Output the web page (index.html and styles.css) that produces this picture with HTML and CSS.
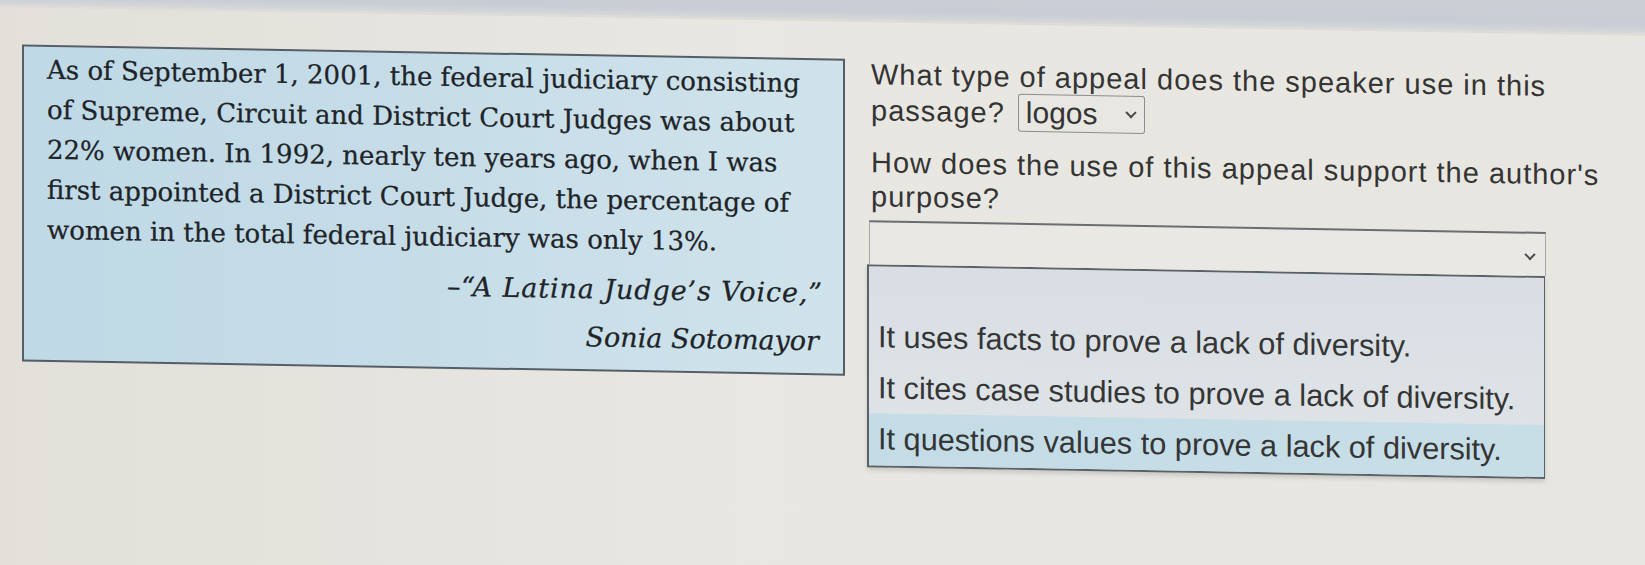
FILE: index.html
```html
<!DOCTYPE html>
<html>
<head>
<meta charset="utf-8">
<link rel="stylesheet" href="styles.css">
</head>
<body>
<div class="wrap">
  <div class="topbar"></div>
  <div class="page">
    <div class="passage">
      <p class="quote">As of September 1, 2001, the federal judiciary consisting<br>of Supreme, Circuit and District Court Judges was about<br>22% women. In 1992, nearly ten years ago, when I was<br>first appointed a District Court Judge, the percentage of<br>women in the total federal judiciary was only 13%.</p>
      <p class="cite title">–“A Latina Judge’s Voice,”</p>
      <p class="cite author">Sonia Sotomayor</p>
    </div>
    <div class="questions">
      <p class="q q1">What type of appeal does the speaker use in this<br>passage? <span class="sel small">logos<span class="chev"></span></span></p>
      <p class="q q2">How does the use of this appeal support the author's<br>purpose?</p>
      <div class="sel wide"><span class="chev"></span></div>
      <ul class="list">
        <li class="opt empty"></li>
        <li class="opt">It uses facts to prove a lack of diversity.</li>
        <li class="opt">It cites case studies to prove a lack of diversity.</li>
        <li class="opt hl">It questions values to prove a lack of diversity.</li>
      </ul>
    </div>
  </div>
</div>
</body>
</html>
```
FILE: styles.css
```css
html, body {
  margin: 0;
  padding: 0;
}
body {
  width: 1645px;
  height: 565px;
  overflow: hidden;
  background: linear-gradient(90deg, #e3e0da 0%, #e8e7e1 45%, #e7e6e0 100%);
  font-family: "Liberation Sans", Arial, sans-serif;
  color: #383838;
}
.wrap {
  transform: skewY(1deg);
  transform-origin: 0 0;
}
.topbar {
  height: 45px;
  margin-top: -40px;
  background: linear-gradient(180deg, #cdd0d6 0%, #c8ccd4 80%, #d6d8da 100%);
  border-bottom: 2px solid #dcdbd6;
}
.page {
  display: flex;
  align-items: flex-start;
  padding: 37px 0 0 22px;
}
.passage {
  width: 776px;
  padding: 3px 20px 12px 23px;
  border: 2px solid #535e69;
  background: linear-gradient(90deg, #bfd9e6 0%, #c6dde8 50%, #d0e3eb 100%);
  font-family: "DejaVu Serif", Georgia, serif;
  color: #202428;
  -webkit-text-stroke: 0.25px #202428;
}
.quote {
  margin: 0;
  font-size: 26px;
  line-height: 40px;
  white-space: nowrap;
}
.cite {
  margin: 10px 0 0 0;
  text-align: right;
  font-style: italic;
  font-size: 27px;
  line-height: 40px;
}
.title {
  letter-spacing: 0.9px;
}
.author {
  margin-top: 8px;
  margin-right: 4px;
}
.questions {
  width: 760px;
  margin-left: 23px;
  margin-top: -3px;
}
.q {
  margin: 0;
  padding-left: 3px;
  font-size: 29px;
  letter-spacing: 1px;
  color: #343434;
}
.q1 {
  line-height: 36px;
}
.q2 {
  margin-top: 17px;
  line-height: 34px;
}
.sel {
  position: relative;
  background: #e8e7e2;
}
.small {
  display: inline-block;
  box-sizing: border-box;
  width: 127px;
  height: 38px;
  line-height: 36px;
  margin: -6px 0 -2px 4px;
  padding-left: 7px;
  border: 1px solid #8d8e8f;
  border-radius: 3px;
  vertical-align: middle;
  letter-spacing: 0;
  font-size: 30px;
}
.chev {
  position: absolute;
  right: 9px;
  top: 50%;
  width: 6px;
  height: 6px;
  margin-top: -6px;
  border-right: 2px solid #4a4a4a;
  border-bottom: 2px solid #4a4a4a;
  transform: rotate(45deg);
}
.wide {
  width: 675px;
  height: 42px;
  margin: 7px 0 0 1px;
  border-top: 2px solid #6b6d71;
  border-left: 1px solid #a8a9aa;
  border-right: 1px solid #a8a9aa;
  background: #e9e8e4;
}
.wide .chev {
  right: 11px;
  margin-top: -4px;
}
.list {
  list-style: none;
  width: 675px;
  margin: 0 0 0 -1px;
  padding: 0;
  border: 2px solid #5b6169;
  border-right-width: 1px;
  background: linear-gradient(180deg, #d8dee4 0%, #dde2e6 60%, #dfe3e6 100%);
  box-shadow: 0 3px 4px rgba(60, 60, 60, 0.18);
}
.opt {
  height: 51px;
  line-height: 51px;
  padding-left: 9px;
  font-size: 30.7px;
  white-space: nowrap;
  color: #353535;
}
.empty {
  height: 45px;
}
.hl {
  height: 52px;
  line-height: 52px;
  background: linear-gradient(90deg, #c3dce6 0%, #c8dee7 100%);
}
```
